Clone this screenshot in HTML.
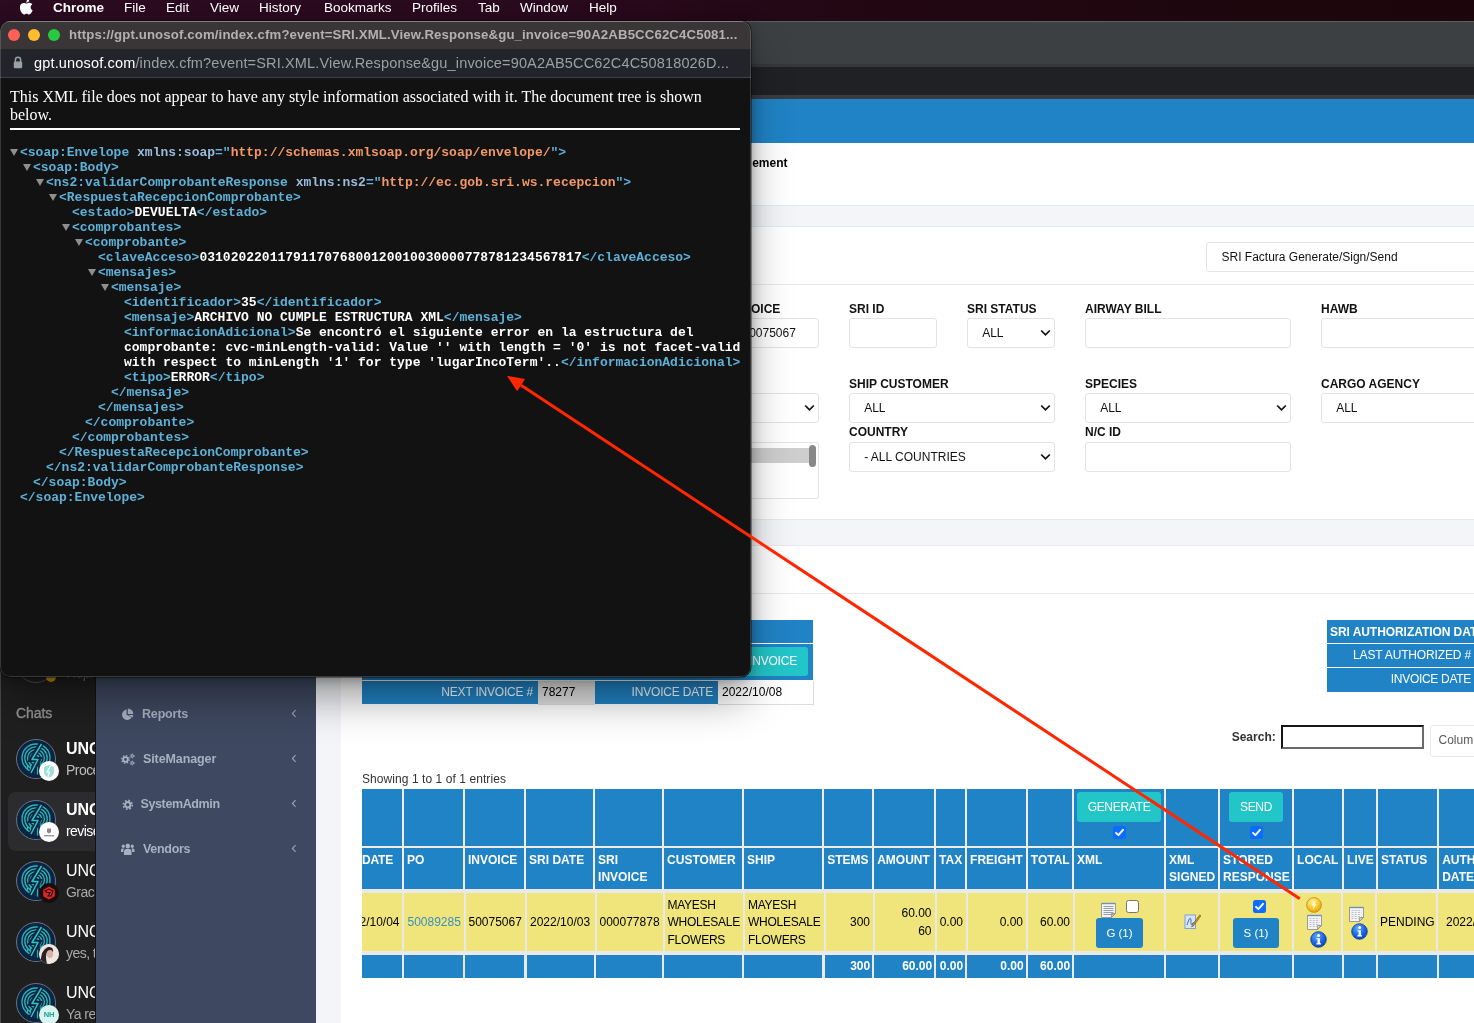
<!DOCTYPE html>
<html lang="en">
<head>
<meta charset="utf-8">
<title>SRI XML View Response</title>
<style>
*{box-sizing:border-box;margin:0;padding:0}
html,body{width:1474px;height:1023px;overflow:hidden;background:#2b0b20}
body{position:relative;font-family:"Liberation Sans",Arial,sans-serif;font-size:13px;color:#000}
.abs{position:absolute}
/* ---------- mac menu bar ---------- */
#menubar{position:absolute;left:0;top:0;width:1474px;height:22px;background:linear-gradient(90deg,#2b0b20 0%,#2a0a1f 35%,#220712 60%,#1c060b 100%);color:#fff;font-size:13.5px;line-height:16px}
#menubar span{position:absolute;top:0px;white-space:nowrap}
/* ---------- main chrome window (behind) ---------- */
#mainwin{position:absolute;left:0;top:21px;width:1474px;height:1002px;background:#fff;overflow:hidden;border-top-left-radius:10px}
#mw-title{position:absolute;left:0;top:0;width:1474px;height:43px;background:#3d4043;border-top:1px solid #5d6063;box-shadow:0 -1px 0 #0a0406}
#mw-title2{position:absolute;left:0;top:43px;width:1474px;height:3px;background:#35373a}
#mw-tool{position:absolute;left:0;top:46px;width:1474px;height:28px;background:#202124}
#mw-tool2{position:absolute;left:0;top:74px;width:1474px;height:4px;background:#3a3c40}
#bluebar{position:absolute;left:316px;top:78px;width:1158px;height:44px;background:#2083c5}
#pagebg{position:absolute;left:316px;top:122px;width:1158px;height:880px;background:#f3f5f8}
.card{position:absolute;background:#fff}
.lbl{position:absolute;font-weight:bold;font-size:12px;line-height:14px;color:#111;white-space:nowrap}
.inp{position:absolute;height:30px;border:1px solid #e2e3e4;border-radius:3px;background:#fff;font-size:12px;line-height:29px;padding-left:14px;color:#111;white-space:nowrap;overflow:hidden}
.inp svg{position:absolute;right:6px;top:10px}
/* ---------- sidebar ---------- */
#sidebar{position:absolute;left:96px;top:600px;width:220px;height:423px;background:#3e4860}
.sitem{position:absolute;left:0;width:220px;height:20px;color:#a7b1c2;font-weight:bold;font-size:12.5px;line-height:20px}
.sitem b{position:absolute;top:0;white-space:nowrap}
.sitem svg{position:absolute}
/* ---------- chat panel ---------- */
#chat{position:absolute;left:0;top:600px;width:96px;height:423px;background:#1f1f1f;overflow:hidden;color:#fff}
.av{position:absolute;left:16px;width:40px;height:40px;border-radius:50%;background:#0c2444;border:1px solid #6d7380;overflow:hidden}
.bdg{position:absolute;left:39px;width:20px;height:20px;border-radius:50%;background:#fff}
.cn{position:absolute;left:66px;font-size:16px;line-height:20px;white-space:nowrap}
.cm{position:absolute;left:66px;font-size:14px;line-height:18px;color:#a9a9a9;white-space:nowrap;letter-spacing:-.55px}
/* ---------- data table ---------- */
.th{position:absolute;background:#2083c5;color:#fff;font-weight:bold;font-size:12px;line-height:17px;padding:4px 0 0 3px;white-space:nowrap;overflow:hidden}
.td{position:absolute;background:#f0e57a;color:#000;font-size:13px;line-height:17.5px;white-space:nowrap;overflow:hidden}
.tf{position:absolute;background:#2083c5;color:#fff;font-weight:bold;font-size:12px;line-height:23px;text-align:right;padding-right:2px;white-space:nowrap;overflow:hidden}
.btn{position:absolute;border-radius:3px;color:#fff;text-align:center;white-space:nowrap}
.cb{position:absolute;width:13px;height:13px;border-radius:2.5px;background:#0b6cff}
.cb svg{position:absolute;left:0;top:0}
.cbo{position:absolute;width:13px;height:13px;border-radius:2.5px;background:#fff;border:1px solid #767676}
/* ---------- popup window ---------- */
#popup{position:absolute;left:0;top:21px;width:751px;height:656px;border-radius:10px;background:#121212;overflow:hidden;box-shadow:0 0 0 .5px rgba(0,0,0,.7),0 24px 44px -5px rgba(0,0,0,.42),0 2px 12px 0 rgba(0,0,0,.30)}
#pp-title{position:absolute;left:0;top:0;width:751px;height:28.5px;background:#3a3638;border-top:1px solid #6a6769;border-bottom:1px solid #0c0c0c}
#pp-title .tl{position:absolute;top:7px;width:12px;height:12px;border-radius:50%}
#pp-title .tt{position:absolute;left:69px;top:5px;font-weight:bold;font-size:13.2px;line-height:16px;color:#b3b0b2;white-space:nowrap;letter-spacing:.135px}
#pp-addr{position:absolute;left:0;top:28px;width:751px;height:29px;background:#22242a;border-bottom:1px solid #3d3f45}
#pp-addr .u{position:absolute;left:34px;top:5px;font-size:14.5px;line-height:18px;color:#9aa0a6;white-space:nowrap;letter-spacing:.16px}
#pp-addr .u i{font-style:normal;color:#fff}
#pp-msg{position:absolute;left:10px;top:67px;width:735px;font-family:"Liberation Serif","Times New Roman",serif;font-size:16px;line-height:18px;color:#fff}
#pp-hr{position:absolute;left:10px;top:107px;width:730px;height:2px;background:#fff}
.xl{position:absolute;font-family:"Liberation Mono","Courier New",monospace;font-weight:bold;font-size:13px;line-height:15px;white-space:pre;color:#fff;height:15px}
.xl .t{color:#5db0d7}.xl .an{color:#9bbbdc}.xl .av2{color:#f29766}
.xl .tri{position:absolute;left:-10px;top:4px;width:0;height:0;border-left:4px solid transparent;border-right:4px solid transparent;border-top:7px solid #8f8f8f}
#popup:after{content:"";position:absolute;left:0;top:0;right:0;bottom:0;border-radius:10px;border:1px solid rgba(255,255,255,.16);pointer-events:none}
</style>
</head>
<body>
<div id="root" style="position:absolute;left:0;top:0;width:1474px;height:1023px;will-change:transform">
<!-- MENUBAR -->
<div id="menubar">
<svg class="abs" style="left:19.500px;top:-1.500px" width="14" height="16.500" viewBox="0 0 170 200"><path fill="#fff" d="M150.4 146.7c-2.8 6.5-6.100 12.500-9.900 18-5.200 7.400-9.500 12.600-12.800 15.500-5.100 4.700-10.600 7.100-16.500 7.200-4.200 0-9.300-1.200-15.200-3.600-5.900-2.400-11.400-3.600-16.400-3.600-5.200 0-10.800 1.200-16.800 3.600-6 2.400-10.800 3.700-14.500 3.800-5.600.2-11.200-2.200-16.800-7.400-3.600-3.100-8.100-8.500-13.400-16.100-5.700-8.100-10.500-17.400-14.200-28.100C.9 124.300-1 113.100-1 102.300c0-12.400 2.700-23.100 8-32 4.200-7.200 9.800-12.900 16.800-17 7-4.200 14.600-6.300 22.800-6.400 4.500 0 10.300 1.400 17.600 4.100 7.200 2.700 11.900 4.100 13.900 4.100 1.500 0 6.700-1.600 15.500-4.800 8.300-3 15.300-4.200 21.100-3.700 15.600 1.300 27.300 7.400 35.100 18.500-13.900 8.400-20.800 20.300-20.700 35.400.1 11.800 4.400 21.700 12.800 29.400 3.800 3.600 8.100 6.400 12.800 8.400-1 3-2.100 5.800-3.300 8.500zM115 3.900c0 9.300-3.400 17.900-10.100 25.900-8.100 9.500-18 15-28.600 14.100-.1-1.100-.2-2.300-.2-3.500 0-8.900 3.900-18.400 10.700-26.200 3.400-3.900 7.800-7.200 13-9.800 5.300-2.600 10.200-4 14.900-4.300.2 1.300.3 2.600.3 3.800z"/></svg>
<span style="left:53px;font-weight:bold">Chrome</span>
<span style="left:124px">File</span>
<span style="left:166px">Edit</span>
<span style="left:210px">View</span>
<span style="left:259px">History</span>
<span style="left:324px">Bookmarks</span>
<span style="left:412px">Profiles</span>
<span style="left:478px">Tab</span>
<span style="left:520px">Window</span>
<span style="left:589px">Help</span>
</div>

<!-- MAIN WINDOW BEHIND -->
<div id="mainwin">
<div id="mw-title"></div><div id="mw-title2"></div><div id="mw-tool"></div><div id="mw-tool2"></div>
</div>
<div id="bluebar" style="top:99px"></div>
<div id="pagebg" style="top:143px"></div>
<div class="card" style="left:341px;top:143px;width:1133px;height:63px;border-bottom:1px solid #e7eaec"></div>
<div class="abs" style="left:751.5px;top:150px;width:100px;height:30px;overflow:hidden"><div class="abs" style="right:64px;top:5px;font-weight:bold;font-size:12px;line-height:16px;white-space:nowrap">SRI Invoice Management</div></div>
<div class="card" style="left:341px;top:226px;width:1133px;height:294px;border-top:1px solid #e7eaec;border-bottom:1px solid #e7eaec"></div>
<div class="abs" style="left:341px;top:284px;width:1133px;height:1px;background:#e7eaec"></div>
<div class="card" style="left:341px;top:545px;width:1133px;height:478px;border-top:1px solid #e7eaec"></div>
<div class="abs" style="left:341px;top:593px;width:1133px;height:1px;background:#e7eaec"></div>
<div class="inp" style="left:1206px;top:242px;width:300px;height:30px;padding-left:14.5px">SRI Factura Generate/Sign/Send</div>
<div class="lbl" style="left:731px;top:302px">INVOICE</div>
<div class="inp" style="left:731px;top:318px;width:88px;height:30px;padding-left:10.5px">50075067</div>
<div class="lbl" style="left:849px;top:302px">SRI ID</div>
<div class="inp" style="left:849px;top:318px;width:88px;height:30px;padding-left:14px"></div>
<div class="lbl" style="left:967px;top:302px">SRI STATUS</div>
<div class="inp" style="left:967px;top:318px;width:88px;height:30px;padding-left:14.2px">ALL</div>
<svg class="abs" style="left:1040.2px;top:329.1px" width="11" height="8" viewBox="0 0 11 8"><path d="M1.2 1.5 L5.5 5.8 L9.8 1.5" fill="none" stroke="#111" stroke-width="1.75"/></svg>
<div class="lbl" style="left:1085px;top:302px">AIRWAY BILL</div>
<div class="inp" style="left:1085px;top:318px;width:206px;height:30px;padding-left:14px"></div>
<div class="lbl" style="left:1321px;top:302px">HAWB</div>
<div class="inp" style="left:1321px;top:318px;width:206px;height:30px;padding-left:14px"></div>
<div class="lbl" style="left:613px;top:377px">CUSTOMER</div>
<div class="inp" style="left:613px;top:393px;width:206px;height:30px;padding-left:14px">ALL</div>
<svg class="abs" style="left:804.2px;top:404.1px" width="11" height="8" viewBox="0 0 11 8"><path d="M1.2 1.5 L5.5 5.8 L9.8 1.5" fill="none" stroke="#111" stroke-width="1.75"/></svg>
<div class="lbl" style="left:849px;top:377px">SHIP CUSTOMER</div>
<div class="inp" style="left:849px;top:393px;width:206px;height:30px;padding-left:14.2px">ALL</div>
<svg class="abs" style="left:1040.2px;top:404.1px" width="11" height="8" viewBox="0 0 11 8"><path d="M1.2 1.5 L5.5 5.8 L9.8 1.5" fill="none" stroke="#111" stroke-width="1.75"/></svg>
<div class="lbl" style="left:1085px;top:377px">SPECIES</div>
<div class="inp" style="left:1085px;top:393px;width:206px;height:30px;padding-left:14.2px">ALL</div>
<svg class="abs" style="left:1276.2px;top:404.1px" width="11" height="8" viewBox="0 0 11 8"><path d="M1.2 1.5 L5.5 5.8 L9.8 1.5" fill="none" stroke="#111" stroke-width="1.75"/></svg>
<div class="lbl" style="left:1321px;top:377px">CARGO AGENCY</div>
<div class="inp" style="left:1321px;top:393px;width:206px;height:30px;padding-left:14.2px">ALL</div>
<div class="lbl" style="left:849px;top:425px">COUNTRY</div>
<div class="inp" style="left:849px;top:442px;width:206px;height:30px;padding-left:14.2px">- ALL COUNTRIES</div>
<svg class="abs" style="left:1040.2px;top:453.1px" width="11" height="8" viewBox="0 0 11 8"><path d="M1.2 1.5 L5.5 5.8 L9.8 1.5" fill="none" stroke="#111" stroke-width="1.75"/></svg>
<div class="lbl" style="left:1085px;top:425px">N/C ID</div>
<div class="inp" style="left:1085px;top:442px;width:206px;height:30px;padding-left:14px"></div>
<div class="inp" style="left:613px;top:442px;width:206px;height:57px"></div>
<div class="abs" style="left:620px;top:448px;width:188.5px;height:15px;background:#cecece"></div>
<div class="abs" style="left:809px;top:445px;width:7px;height:22px;border-radius:3.5px;background:#888"></div>
<div class="abs" style="left:362px;top:620px;width:451px;height:23px;background:#2083c5"></div>
<div class="abs" style="left:362px;top:644px;width:451px;height:36px;background:#2083c5"></div>
<div class="btn" style="left:660px;top:647px;width:148px;height:29px;background:#23c6c8;font-size:12px;line-height:29px;text-align:right;padding-right:11px;letter-spacing:-.2px">GENERATE INVOICE</div>
<div class="abs" style="left:362px;top:681px;width:176px;height:23px;background:#2083c5;color:#fff;font-size:12px;line-height:23px;text-align:right;padding-right:5px;letter-spacing:-.2px">NEXT INVOICE #</div>
<div class="abs" style="left:538px;top:681px;width:57px;height:23.6px;background:#e4e4e4;font-size:12px;line-height:22px;padding-left:4px;border-bottom:1px solid #ddd">78277</div>
<div class="abs" style="left:595px;top:681px;width:123px;height:23px;background:#2083c5;color:#fff;font-size:12px;line-height:23px;text-align:right;padding-right:5px;letter-spacing:-.2px">INVOICE DATE</div>
<div class="abs" style="left:718px;top:681px;width:95.5px;height:23.6px;background:#fff;font-size:12px;line-height:22px;padding-left:4px;border:1px solid #ddd;border-left:0;border-top:0">2022/10/08</div>
<div class="abs" style="left:1327px;top:620px;width:160px;height:23px;background:#2083c5;color:#fff;font-weight:bold;font-size:12px;line-height:25px;padding-left:3px;white-space:nowrap;letter-spacing:-.06px;overflow:hidden">SRI AUTHORIZATION DATE</div>
<div class="abs" style="left:1327px;top:644px;width:147px;height:23px;background:#2083c5;color:#fff;font-size:12px;line-height:23px;text-align:right;padding-right:3px;white-space:nowrap;letter-spacing:-.15px">LAST AUTHORIZED #</div>
<div class="abs" style="left:1327px;top:668px;width:147px;height:24px;background:#2083c5;color:#fff;font-size:12px;line-height:23px;text-align:right;padding-right:3px;white-space:nowrap;letter-spacing:-.3px">INVOICE DATE</div>
<div class="abs" style="left:1231.700px;top:729px;font-weight:bold;font-size:12px;line-height:16px;color:#333">Search:</div>
<div class="abs" style="left:1281px;top:725px;width:143px;height:24px;background:#fff;border:2px solid;border-color:#161616 #6a6a6a #6a6a6a #161616"></div>
<div class="abs" style="left:1429.500px;top:725px;width:60px;height:32px;background:#fff;border:1px solid #e7eaec;border-radius:3px;color:#5a5a5a;font-size:12px;line-height:29px;padding-left:8px">Columns</div>
<div class="abs" style="left:362px;top:771px;font-size:12px;line-height:16px;color:#333;letter-spacing:.07px">Showing 1 to 1 of 1 entries</div>
<div class="abs" style="left:362px;top:789px;width:1112px;height:100px;background:#f1ece8"></div>
<div class="abs" style="left:362px;top:888.6px;width:1112px;height:89.4px;background:#e9e9eb"></div>
<div class="th" style="left:362.0px;top:789px;width:39.9px;height:56.8px"></div>
<div class="th" style="left:362.0px;top:848px;width:39.9px;height:40.6px;padding-left:0;letter-spacing:-.2px;">DATE</div>
<div class="td" style="left:362.0px;top:892.8px;width:39.9px;height:58px"></div>
<div class="tf" style="left:362.0px;top:955px;width:39.9px;height:23px"></div>
<div class="th" style="left:404.1px;top:789px;width:58.7px;height:56.8px"></div>
<div class="th" style="left:404.1px;top:848px;width:58.7px;height:40.6px;">PO</div>
<div class="td" style="left:404.1px;top:892.8px;width:59.7px;height:58px"></div>
<div class="tf" style="left:404.1px;top:955px;width:58.9px;height:23px"></div>
<div class="th" style="left:465.0px;top:789px;width:58.9px;height:56.8px"></div>
<div class="th" style="left:465.0px;top:848px;width:58.9px;height:40.6px;">INVOICE</div>
<div class="td" style="left:466.0px;top:892.8px;width:58.9px;height:58px"></div>
<div class="tf" style="left:465.2px;top:955px;width:59.3px;height:23px"></div>
<div class="th" style="left:526.1px;top:789px;width:66.8px;height:56.8px"></div>
<div class="th" style="left:526.1px;top:848px;width:66.8px;height:40.6px;">SRI DATE</div>
<div class="td" style="left:527.1px;top:892.8px;width:67.8px;height:58px"></div>
<div class="tf" style="left:526.7px;top:955px;width:67.2px;height:23px"></div>
<div class="th" style="left:595.1px;top:789px;width:66.8px;height:56.8px"></div>
<div class="th" style="left:595.1px;top:848px;width:66.8px;height:40.6px;">SRI<br>INVOICE</div>
<div class="td" style="left:597.1px;top:892.8px;width:65.8px;height:58px"></div>
<div class="tf" style="left:596.1px;top:955px;width:66.1px;height:23px"></div>
<div class="th" style="left:664.1px;top:789px;width:77.8px;height:56.8px"></div>
<div class="th" style="left:664.1px;top:848px;width:77.8px;height:40.6px;">CUSTOMER</div>
<div class="td" style="left:665.1px;top:892.8px;width:77.5px;height:58px"></div>
<div class="tf" style="left:664.4px;top:955px;width:77.7px;height:23px"></div>
<div class="th" style="left:744.1px;top:789px;width:77.9px;height:56.8px"></div>
<div class="th" style="left:744.1px;top:848px;width:77.9px;height:40.6px;">SHIP</div>
<div class="td" style="left:744.8px;top:892.8px;width:79.1px;height:58px"></div>
<div class="tf" style="left:744.3px;top:955px;width:78.1px;height:23px"></div>
<div class="th" style="left:824.2px;top:789px;width:47.8px;height:56.8px"></div>
<div class="th" style="left:824.2px;top:848px;width:47.8px;height:40.6px;">STEMS</div>
<div class="td" style="left:826.1px;top:892.8px;width:46.8px;height:58px"></div>
<div class="tf" style="left:824.6px;top:955px;width:47.6px;height:23px">300</div>
<div class="th" style="left:874.2px;top:789px;width:59.7px;height:56.8px"></div>
<div class="th" style="left:874.2px;top:848px;width:59.7px;height:40.6px;">AMOUNT</div>
<div class="td" style="left:875.1px;top:892.8px;width:59.8px;height:58px"></div>
<div class="tf" style="left:874.4px;top:955px;width:59.8px;height:23px">60.00</div>
<div class="th" style="left:936.1px;top:789px;width:28.8px;height:56.8px"></div>
<div class="th" style="left:936.1px;top:848px;width:28.8px;height:40.6px;">TAX</div>
<div class="td" style="left:937.1px;top:892.8px;width:28.8px;height:58px"></div>
<div class="tf" style="left:936.4px;top:955px;width:28.8px;height:23px">0.00</div>
<div class="th" style="left:967.1px;top:789px;width:58.5px;height:56.8px"></div>
<div class="th" style="left:967.1px;top:848px;width:58.5px;height:40.6px;">FREIGHT</div>
<div class="td" style="left:968.1px;top:892.8px;width:58.0px;height:58px"></div>
<div class="tf" style="left:967.4px;top:955px;width:58.3px;height:23px">0.00</div>
<div class="th" style="left:1027.8px;top:789px;width:44.1px;height:56.8px"></div>
<div class="th" style="left:1027.8px;top:848px;width:44.1px;height:40.6px;">TOTAL</div>
<div class="td" style="left:1028.3px;top:892.8px;width:44.3px;height:58px"></div>
<div class="tf" style="left:1027.9px;top:955px;width:44.2px;height:23px">60.00</div>
<div class="th" style="left:1074.1px;top:789px;width:89.8px;height:56.8px"></div>
<div class="th" style="left:1074.1px;top:848px;width:89.8px;height:40.6px;">XML</div>
<div class="td" style="left:1074.8px;top:892.8px;width:89.1px;height:58px"></div>
<div class="tf" style="left:1074.3px;top:955px;width:89.6px;height:23px"></div>
<div class="th" style="left:1166.1px;top:789px;width:51.8px;height:56.8px"></div>
<div class="th" style="left:1166.1px;top:848px;width:51.8px;height:40.6px;">XML<br>SIGNED</div>
<div class="td" style="left:1166.1px;top:892.8px;width:51.8px;height:58px"></div>
<div class="tf" style="left:1166.1px;top:955px;width:51.8px;height:23px"></div>
<div class="th" style="left:1220.1px;top:789px;width:71.8px;height:56.8px"></div>
<div class="th" style="left:1220.1px;top:848px;width:71.8px;height:40.6px;">STORED<br>RESPONSE</div>
<div class="td" style="left:1220.1px;top:892.8px;width:71.6px;height:58px"></div>
<div class="tf" style="left:1220.1px;top:955px;width:71.8px;height:23px"></div>
<div class="th" style="left:1294.1px;top:789px;width:47.8px;height:56.8px"></div>
<div class="th" style="left:1294.1px;top:848px;width:47.8px;height:40.6px;">LOCAL</div>
<div class="td" style="left:1293.9px;top:892.8px;width:47.1px;height:58px"></div>
<div class="tf" style="left:1294.1px;top:955px;width:47.8px;height:23px"></div>
<div class="th" style="left:1344.1px;top:789px;width:31.7px;height:56.8px"></div>
<div class="th" style="left:1344.1px;top:848px;width:31.7px;height:40.6px;">LIVE</div>
<div class="td" style="left:1343.2px;top:892.8px;width:31.6px;height:58px"></div>
<div class="tf" style="left:1344.1px;top:955px;width:31.7px;height:23px"></div>
<div class="th" style="left:1378.0px;top:789px;width:59.0px;height:56.8px"></div>
<div class="th" style="left:1378.0px;top:848px;width:59.0px;height:40.6px;">STATUS</div>
<div class="td" style="left:1377.0px;top:892.8px;width:58.6px;height:58px"></div>
<div class="tf" style="left:1378.0px;top:955px;width:59.0px;height:23px"></div>
<div class="th" style="left:1439.2px;top:789px;width:60.8px;height:56.8px"></div>
<div class="th" style="left:1439.2px;top:848px;width:60.8px;height:40.6px;">AUTH<br>DATE</div>
<div class="td" style="left:1437.8px;top:892.8px;width:62.2px;height:58px"></div>
<div class="tf" style="left:1439.2px;top:955px;width:60.8px;height:23px"></div>
<div class="abs" style="left:362px;top:893px;width:40px;height:57px;overflow:hidden"><div class="abs" style="right:2.5px;top:21px;font-size:12px;line-height:17.5px;white-space:nowrap">2022/10/04</div></div>
<div class="abs" style="left:407.5px;top:914px;font-size:12px;line-height:17.5px;white-space:nowrap;color:#3b8fc4">50089285</div>
<div class="abs" style="left:468.5px;top:914px;font-size:12px;line-height:17.5px;white-space:nowrap;">50075067</div>
<div class="abs" style="left:530px;top:914px;font-size:12px;line-height:17.5px;white-space:nowrap;">2022/10/03</div>
<div class="abs" style="left:599.5px;top:914px;font-size:12px;line-height:17.5px;white-space:nowrap;">000077878</div>
<div class="abs" style="left:667.5px;top:896.5px;font-size:12px;line-height:17.5px;white-space:nowrap;letter-spacing:-.25px">MAYESH<br>WHOLESALE<br>FLOWERS</div>
<div class="abs" style="left:748px;top:896.5px;font-size:12px;line-height:17.5px;white-space:nowrap;letter-spacing:-.25px">MAYESH<br>WHOLESALE<br>FLOWERS</div>
<div class="abs" style="left:750px;width:120px;text-align:right;top:914px;font-size:12px;line-height:17.5px;white-space:nowrap;">300</div>
<div class="abs" style="left:811.5px;width:120px;text-align:right;top:905px;font-size:12px;line-height:17.5px;white-space:nowrap;">60.00<br>60</div>
<div class="abs" style="left:843px;width:120px;text-align:right;top:914px;font-size:12px;line-height:17.5px;white-space:nowrap;">0.00</div>
<div class="abs" style="left:903px;width:120px;text-align:right;top:914px;font-size:12px;line-height:17.5px;white-space:nowrap;">0.00</div>
<div class="abs" style="left:950px;width:120px;text-align:right;top:914px;font-size:12px;line-height:17.5px;white-space:nowrap;">60.00</div>
<div class="abs" style="left:1380px;top:914px;font-size:12px;line-height:17.5px;white-space:nowrap;">PENDING</div>
<div class="abs" style="left:1446px;top:914px;font-size:12px;line-height:17.5px;white-space:nowrap;">2022/10/08</div>
<div class="btn" style="left:1077px;top:792px;width:84px;height:30px;background:#23c6c8;font-size:12px;line-height:30px;letter-spacing:-.3px">GENERATE</div>
<div class="cb" style="left:1113px;top:826px"><svg width="13" height="13" viewBox="0 0 13 13"><path d="M3 6.8 L5.4 9.2 L10 3.8" fill="none" stroke="#fff" stroke-width="1.9" stroke-linecap="round" stroke-linejoin="round"/></svg></div>
<div class="btn" style="left:1229px;top:792px;width:54px;height:30px;background:#23c6c8;font-size:12px;line-height:30px;letter-spacing:-.3px">SEND</div>
<div class="cb" style="left:1250px;top:826px"><svg width="13" height="13" viewBox="0 0 13 13"><path d="M3 6.8 L5.4 9.2 L10 3.8" fill="none" stroke="#fff" stroke-width="1.9" stroke-linecap="round" stroke-linejoin="round"/></svg></div>
<div class="btn" style="left:1096px;top:918px;width:47px;height:30px;background:#2083c5;font-size:11.5px;line-height:30px">G (1)</div>
<div class="btn" style="left:1233px;top:918px;width:46px;height:30px;background:#2083c5;font-size:11.5px;line-height:30px">S (1)</div>
<div class="cbo" style="left:1126px;top:900px"></div>
<div class="cb" style="left:1253px;top:900px"><svg width="13" height="13" viewBox="0 0 13 13"><path d="M3 6.8 L5.4 9.2 L10 3.8" fill="none" stroke="#fff" stroke-width="1.9" stroke-linecap="round" stroke-linejoin="round"/></svg></div>
<svg class="abs" style="left:1099.5px;top:901.8px" width="17" height="17" viewBox="0 0 17 17"><path d="M1.5 1.5 H15.5 V11.5 L11.5 15.5 H1.5 Z" fill="#f4f4f4" stroke="#9a9a9a" stroke-width="1"/><path d="M15.5 11.5 H11.5 V15.5 Z" fill="#d0d0d0" stroke="#8a8a8a" stroke-width=".8"/><path d="M1.5 1.5 H15.5" stroke="#6f8fc0" stroke-width="1.4"/><path d="M3.5 4.5 H13.5" stroke="#8c95a8" stroke-width=".9"/><path d="M3.5 6.5 H13.5" stroke="#8c95a8" stroke-width=".9"/><path d="M3.5 8.5 H13.5" stroke="#8c95a8" stroke-width=".9"/><path d="M3.5 10.5 H13.5" stroke="#8c95a8" stroke-width=".9"/><path d="M3.5 12.5 H13.5" stroke="#8c95a8" stroke-width=".9"/></svg>
<svg class="abs" style="left:1184px;top:913px" width="17" height="17" viewBox="0 0 17 17"><rect x="1" y="2" width="10.5" height="13.5" fill="#d6e6fa" stroke="#7fa2d8" stroke-width="1"/><path d="M3 12 C5 6 6 4 6.8 6 C7.5 8 6 13 8 11 C9.5 9.5 10 9 11 10" fill="none" stroke="#3a62b5" stroke-width="1"/><path d="M15.8 1.8 L8.5 11.5 L7.6 13.8 L9.9 12.6 L16.8 2.9 Z" fill="#c9963a" stroke="#6b4a17" stroke-width=".6"/></svg>
<svg class="abs" style="left:1306px;top:897px" width="16" height="16" viewBox="0 0 16 16"><defs><radialGradient id="gy" cx=".4" cy=".3" r=".8"><stop offset="0" stop-color="#fff2a0"/><stop offset=".6" stop-color="#f5c21e"/><stop offset="1" stop-color="#d99a06"/></radialGradient></defs><circle cx="8" cy="8" r="7.4" fill="url(#gy)" stroke="#c58a08" stroke-width=".8"/><path d="M9.6 3 L6 8.4 H8 L6.6 13 L10.4 7.2 H8.3 Z" fill="#fff"/></svg>
<svg class="abs" style="left:1306px;top:914px" width="17" height="17" viewBox="0 0 17 17"><path d="M1.5 1.5 H15.5 V11.5 L11.5 15.5 H1.5 Z" fill="#f4f4f4" stroke="#9a9a9a" stroke-width="1"/><path d="M15.5 11.5 H11.5 V15.5 Z" fill="#d0d0d0" stroke="#8a8a8a" stroke-width=".8"/><path d="M1.5 1.5 H15.5" stroke="#6f8fc0" stroke-width="1.4"/><path d="M3.5 4.5 H13.5" stroke="#b5b9c2" stroke-width=".9" stroke-dasharray="2 1.2"/><path d="M3.5 6.5 H13.5" stroke="#b5b9c2" stroke-width=".9" stroke-dasharray="2 1.2"/><path d="M3.5 8.5 H13.5" stroke="#b5b9c2" stroke-width=".9" stroke-dasharray="2 1.2"/><path d="M3.5 10.5 H13.5" stroke="#b5b9c2" stroke-width=".9" stroke-dasharray="2 1.2"/><path d="M3.5 12.5 H13.5" stroke="#b5b9c2" stroke-width=".9" stroke-dasharray="2 1.2"/></svg>
<svg class="abs" style="left:1310px;top:931px" width="17" height="17" viewBox="0 0 17 17"><defs><radialGradient id="gi1310" cx=".4" cy=".3" r=".8"><stop offset="0" stop-color="#5fa8ff"/><stop offset=".6" stop-color="#1560e0"/><stop offset="1" stop-color="#0a3fb0"/></radialGradient></defs><circle cx="8.5" cy="8.5" r="7.8" fill="url(#gi1310)" stroke="#0b3a9a" stroke-width=".8"/><circle cx="8.6" cy="4.6" r="1.5" fill="#fff"/><path d="M6.4 7.2 H9.9 V12.3 H11 V13.4 H6.3 V12.3 H7.5 V8.3 H6.4 Z" fill="#fff"/></svg>
<svg class="abs" style="left:1348px;top:906px" width="17" height="17" viewBox="0 0 17 17"><path d="M1.5 1.5 H15.5 V11.5 L11.5 15.5 H1.5 Z" fill="#f4f4f4" stroke="#9a9a9a" stroke-width="1"/><path d="M15.5 11.5 H11.5 V15.5 Z" fill="#d0d0d0" stroke="#8a8a8a" stroke-width=".8"/><path d="M1.5 1.5 H15.5" stroke="#6f8fc0" stroke-width="1.4"/><path d="M3.5 4.5 H13.5" stroke="#b5b9c2" stroke-width=".9" stroke-dasharray="2 1.2"/><path d="M3.5 6.5 H13.5" stroke="#b5b9c2" stroke-width=".9" stroke-dasharray="2 1.2"/><path d="M3.5 8.5 H13.5" stroke="#b5b9c2" stroke-width=".9" stroke-dasharray="2 1.2"/><path d="M3.5 10.5 H13.5" stroke="#b5b9c2" stroke-width=".9" stroke-dasharray="2 1.2"/><path d="M3.5 12.5 H13.5" stroke="#b5b9c2" stroke-width=".9" stroke-dasharray="2 1.2"/></svg>
<svg class="abs" style="left:1351px;top:923px" width="17" height="17" viewBox="0 0 17 17"><defs><radialGradient id="gi1351" cx=".4" cy=".3" r=".8"><stop offset="0" stop-color="#5fa8ff"/><stop offset=".6" stop-color="#1560e0"/><stop offset="1" stop-color="#0a3fb0"/></radialGradient></defs><circle cx="8.5" cy="8.5" r="7.8" fill="url(#gi1351)" stroke="#0b3a9a" stroke-width=".8"/><circle cx="8.6" cy="4.6" r="1.5" fill="#fff"/><path d="M6.4 7.2 H9.9 V12.3 H11 V13.4 H6.3 V12.3 H7.5 V8.3 H6.4 Z" fill="#fff"/></svg>

<div id="sidebar">
<div class="sitem" style="top:104px"><svg style="left:25px;top:4px" width="13" height="13" viewBox="0 0 13 13"><path d="M5.6 1.6 A5.2 5.2 0 1 0 10.6 9.6 L5.6 6.8 Z" fill="#a7b1c2"/><path d="M6.8 .5 A5.4 5.4 0 0 1 12.3 5.9 H6.8 Z" fill="#a7b1c2"/><path d="M7.2 7 H12.3 A5.4 5.4 0 0 1 11.4 9.5 Z" fill="#a7b1c2"/></svg><b style="left:46px;letter-spacing:-0.17px">Reports</b><svg style="left:195px;top:5px" width="6" height="9" viewBox="0 0 6 9"><path d="M4.6 1.2 L1.4 4.500 L4.6 7.800" fill="none" stroke="#9aa5b8" stroke-width="1.1"/></svg></div>
<div class="sitem" style="top:149px"><svg style="left:24.5px;top:4px" width="14" height="13" viewBox="0 0 15 14"><g fill="none" stroke="#a7b1c2"><circle cx="4.8" cy="7" r="2.5" stroke-width="1.9"/><circle cx="4.8" cy="7" r="4" stroke-width="1.5" stroke-dasharray="1.5 1.64"/><circle cx="12" cy="3.2" r="1.3" stroke-width="1.1"/><circle cx="12" cy="3.2" r="2.2" stroke-width="1" stroke-dasharray=".95 1.35"/><circle cx="12" cy="10.8" r="1.3" stroke-width="1.1"/><circle cx="12" cy="10.8" r="2.2" stroke-width="1" stroke-dasharray=".95 1.35"/></g></svg><b style="left:47px;letter-spacing:-0.1px">SiteManager</b><svg style="left:195px;top:5px" width="6" height="9" viewBox="0 0 6 9"><path d="M4.6 1.2 L1.4 4.500 L4.6 7.800" fill="none" stroke="#9aa5b8" stroke-width="1.1"/></svg></div>
<div class="sitem" style="top:194px"><svg style="left:25.5px;top:4.5px" width="11.5" height="11.5" viewBox="0 0 13 13"><g fill="none" stroke="#a7b1c2"><circle cx="6.5" cy="6.5" r="3" stroke-width="2.2"/><circle cx="6.5" cy="6.5" r="5" stroke-width="1.9" stroke-dasharray="1.9 2.03"/></g></svg><b style="left:44.5px;letter-spacing:-0.38px">SystemAdmin</b><svg style="left:195px;top:5px" width="6" height="9" viewBox="0 0 6 9"><path d="M4.6 1.2 L1.4 4.500 L4.6 7.800" fill="none" stroke="#9aa5b8" stroke-width="1.1"/></svg></div>
<div class="sitem" style="top:239px"><svg style="left:25px;top:4px" width="13.5" height="12" viewBox="0 0 15 12" preserveAspectRatio="none"><circle cx="7.5" cy="3" r="2.5" fill="#a7b1c2"/><path d="M3.3 12 V8.5 Q3.3 6 5.5 6 H9.5 Q11.700 6 11.700 8.500 V12 Z" fill="#a7b1c2"/><circle cx="2.500" cy="3.300" r="1.700" fill="#a7b1c2"/><circle cx="12.500" cy="3.300" r="1.700" fill="#a7b1c2"/><path d="M0 9 V7 Q0 5.500 1.500 5.500 H3.300 Q2.500 6.500 2.500 9 Z" fill="#a7b1c2"/><path d="M15 9 V7 Q15 5.500 13.500 5.500 H11.700 Q12.500 6.500 12.500 9 Z" fill="#a7b1c2"/></svg><b style="left:47px;letter-spacing:-0.3px">Vendors</b><svg style="left:195px;top:5px" width="6" height="9" viewBox="0 0 6 9"><path d="M4.6 1.2 L1.4 4.500 L4.6 7.800" fill="none" stroke="#9aa5b8" stroke-width="1.1"/></svg></div>
</div>
<div id="chat">
<div class="abs" style="left:0;top:0;width:1px;height:423px;background:#4a4a4a"></div>
<div class="abs" style="left:8px;top:192px;width:100px;height:59px;border-radius:8px;background:#2c2c2e"></div>
<div class="abs" style="left:16px;top:103.5px;font-size:14px;line-height:18px;color:#939393;letter-spacing:-.05px;-webkit-text-stroke:.35px #939393">Chats</div>
<div class="av" style="top:43px;background:#1f1f1f;border-color:#555"></div><div class="bdg" style="top:71.500px;left:46px;width:10px;height:10px;background:#c9930c"></div>
<div class="cm" style="top:63.500px;color:#777">Repl</div>
<div class="av" style="top:139px"><svg width="38" height="38" viewBox="0 0 38 38"><g fill="none" stroke="#2ab3b3" stroke-width="1.35"><circle cx="19" cy="18" r="2.8"/><circle cx="19" cy="18" r="5.6"/><circle cx="19" cy="18" r="8.4"/><circle cx="19" cy="18" r="11.2"/><circle cx="19" cy="18" r="14"/></g><path d="M19 18 L8 40 H30 Z" fill="#0c2444"/><g fill="none" stroke="#2ab3b3" stroke-width="1.35" stroke-linecap="round"><path d="M13.500 24 V31"/><path d="M16.800 22 V33"/><path d="M20.500 22 V34"/><path d="M24 23 V32"/><path d="M27 25 V30"/><path d="M10.500 26 V29"/></g><path d="M25 2 L14.500 19.500 H21.500 L13 36" fill="none" stroke="#0c2444" stroke-width="5"/><path d="M24.500 4 L15 19.500 H21 L14 33" fill="none" stroke="#2fc4c0" stroke-width="1.500" stroke-linejoin="round"/></svg></div>
<div class="bdg" style="top:161px;background:#fff;overflow:hidden"><svg width="20" height="20" viewBox="0 0 20 20"><path d="M10 4 L15 6 V11 Q15 14.500 10 16.500 Q5 14.500 5 11 V6 Z" fill="#9fe0dc"/><path d="M11.500 5 L8 11 H10.500 L9 15.500" stroke="#fff" stroke-width="1.2" fill="none"/></svg></div>
<div class="cn" style="top:139px;font-weight:bold">UNOSOF</div>
<div class="cm" style="top:161px;color:#bdbdbd">Proce</div>
<div class="av" style="top:200px"><svg width="38" height="38" viewBox="0 0 38 38"><g fill="none" stroke="#2ab3b3" stroke-width="1.35"><circle cx="19" cy="18" r="2.8"/><circle cx="19" cy="18" r="5.6"/><circle cx="19" cy="18" r="8.4"/><circle cx="19" cy="18" r="11.2"/><circle cx="19" cy="18" r="14"/></g><path d="M19 18 L8 40 H30 Z" fill="#0c2444"/><g fill="none" stroke="#2ab3b3" stroke-width="1.35" stroke-linecap="round"><path d="M13.500 24 V31"/><path d="M16.800 22 V33"/><path d="M20.500 22 V34"/><path d="M24 23 V32"/><path d="M27 25 V30"/><path d="M10.500 26 V29"/></g><path d="M25 2 L14.500 19.500 H21.500 L13 36" fill="none" stroke="#0c2444" stroke-width="5"/><path d="M24.500 4 L15 19.500 H21 L14 33" fill="none" stroke="#2fc4c0" stroke-width="1.500" stroke-linejoin="round"/></svg></div>
<div class="bdg" style="top:222px;background:#fff;overflow:hidden"><svg width="20" height="20" viewBox="0 0 20 20"><path d="M8 6.500 H12 V9.500 Q12 11 10 11.500 Q8 11 8 9.500 Z" fill="#8a8a8a"/><rect x="5" y="13" width="10" height="1.400" fill="#9a9a9a"/></svg></div>
<div class="cn" style="top:200px;font-weight:bold">UNOSOF</div>
<div class="cm" style="top:222px;color:#fff">revise</div>
<div class="av" style="top:261px"><svg width="38" height="38" viewBox="0 0 38 38"><g fill="none" stroke="#2ab3b3" stroke-width="1.35"><circle cx="19" cy="18" r="2.8"/><circle cx="19" cy="18" r="5.6"/><circle cx="19" cy="18" r="8.4"/><circle cx="19" cy="18" r="11.2"/><circle cx="19" cy="18" r="14"/></g><path d="M19 18 L8 40 H30 Z" fill="#0c2444"/><g fill="none" stroke="#2ab3b3" stroke-width="1.35" stroke-linecap="round"><path d="M13.500 24 V31"/><path d="M16.800 22 V33"/><path d="M20.500 22 V34"/><path d="M24 23 V32"/><path d="M27 25 V30"/><path d="M10.500 26 V29"/></g><path d="M25 2 L14.500 19.500 H21.500 L13 36" fill="none" stroke="#0c2444" stroke-width="5"/><path d="M24.500 4 L15 19.500 H21 L14 33" fill="none" stroke="#2fc4c0" stroke-width="1.500" stroke-linejoin="round"/></svg></div>
<div class="bdg" style="top:283px;background:#1a0d0d;overflow:hidden"><svg width="20" height="20" viewBox="0 0 20 20"><path d="M10 3.500 L15.800 6.800 V13.200 L10 16.500 L4.200 13.200 V6.800 Z" fill="#e02525"/><path d="M6 8 L10 6 L14 8 L12 13 H9 L11 9.500 H7.500 Z" fill="none" stroke="#1a0d0d" stroke-width="1.100"/></svg></div>
<div class="cn" style="top:261px;">UNOSOF</div>
<div class="cm" style="top:283px;color:#a9a9a9">Graci</div>
<div class="av" style="top:322px"><svg width="38" height="38" viewBox="0 0 38 38"><g fill="none" stroke="#2ab3b3" stroke-width="1.35"><circle cx="19" cy="18" r="2.8"/><circle cx="19" cy="18" r="5.6"/><circle cx="19" cy="18" r="8.4"/><circle cx="19" cy="18" r="11.2"/><circle cx="19" cy="18" r="14"/></g><path d="M19 18 L8 40 H30 Z" fill="#0c2444"/><g fill="none" stroke="#2ab3b3" stroke-width="1.35" stroke-linecap="round"><path d="M13.500 24 V31"/><path d="M16.800 22 V33"/><path d="M20.500 22 V34"/><path d="M24 23 V32"/><path d="M27 25 V30"/><path d="M10.500 26 V29"/></g><path d="M25 2 L14.500 19.500 H21.500 L13 36" fill="none" stroke="#0c2444" stroke-width="5"/><path d="M24.500 4 L15 19.500 H21 L14 33" fill="none" stroke="#2fc4c0" stroke-width="1.500" stroke-linejoin="round"/></svg></div>
<div class="bdg" style="top:344px;background:#e8d8d0;overflow:hidden"><svg width="20" height="20" viewBox="0 0 20 20"><circle cx="10" cy="10" r="10" fill="#efe6e2"/><path d="M2 20 Q1 6 9 3 Q15 2 14 9 Q12 5 8 8 Q6 12 8 20 Z" fill="#2a2224"/><ellipse cx="11" cy="10" rx="3.200" ry="4" fill="#d9b3a6"/></svg></div>
<div class="cn" style="top:322px;">UNOSOF</div>
<div class="cm" style="top:344px;color:#a9a9a9">yes, t</div>
<div class="av" style="top:383px"><svg width="38" height="38" viewBox="0 0 38 38"><g fill="none" stroke="#2ab3b3" stroke-width="1.35"><circle cx="19" cy="18" r="2.8"/><circle cx="19" cy="18" r="5.6"/><circle cx="19" cy="18" r="8.4"/><circle cx="19" cy="18" r="11.2"/><circle cx="19" cy="18" r="14"/></g><path d="M19 18 L8 40 H30 Z" fill="#0c2444"/><g fill="none" stroke="#2ab3b3" stroke-width="1.35" stroke-linecap="round"><path d="M13.500 24 V31"/><path d="M16.800 22 V33"/><path d="M20.500 22 V34"/><path d="M24 23 V32"/><path d="M27 25 V30"/><path d="M10.500 26 V29"/></g><path d="M25 2 L14.500 19.500 H21.500 L13 36" fill="none" stroke="#0c2444" stroke-width="5"/><path d="M24.500 4 L15 19.500 H21 L14 33" fill="none" stroke="#2fc4c0" stroke-width="1.500" stroke-linejoin="round"/></svg></div>
<div class="bdg" style="top:405px;background:#d9f5f0;overflow:hidden"><div style="font-size:7.500px;font-weight:bold;color:#1f9f95;line-height:20px;text-align:center;letter-spacing:-.2px">NH</div></div>
<div class="cn" style="top:383px;">UNOSOF</div>
<div class="cm" style="top:405px;color:#a9a9a9">Ya re</div>
</div>
<div class="abs" style="left:95px;top:600px;width:1px;height:423px;background:#121212"></div>

<div id="popup">
<div id="pp-title"><div class="tl" style="left:8px;background:#fe5f57"></div><div class="tl" style="left:28px;background:#febc2e"></div><div class="tl" style="left:48px;background:#28c840"></div><div class="tt">https://gpt.unosof.com/index.cfm?event=SRI.XML.View.Response&amp;gu_invoice=90A2AB5CC62C4C5081...</div></div>
<div id="pp-addr"><svg class="abs" style="left:13px;top:7px" width="10" height="13" viewBox="0 0 10 13"><path d="M2.400 6 V3.800 A2.600 2.600 0 0 1 7.600 3.800 V6" fill="none" stroke="#9aa0a6" stroke-width="1.500"/><rect x=".8" y="5.600" width="8.400" height="6.600" rx="1.200" fill="#9aa0a6"/></svg><div class="u"><i>gpt.unosof.com</i>/index.cfm?event=SRI.XML.View.Response&amp;gu_invoice=90A2AB5CC62C4C50818026D...</div></div>
<div id="pp-msg">This XML file does not appear to have any style information associated with it. The document tree is shown below.</div>
<div id="pp-hr"></div>
<div class="xl" style="left:20px;top:124px"><span class="tri"></span><span class="t">&lt;soap:Envelope</span> <span class="an">xmlns:soap</span><span class="t">="</span><span class="av2">http://schemas.xmlsoap.org/soap/envelope/</span><span class="t">"&gt;</span></div>
<div class="xl" style="left:33px;top:139px"><span class="tri"></span><span class="t">&lt;soap:Body&gt;</span></div>
<div class="xl" style="left:46px;top:154px"><span class="tri"></span><span class="t">&lt;ns2:validarComprobanteResponse</span> <span class="an">xmlns:ns2</span><span class="t">="</span><span class="av2">http://ec.gob.sri.ws.recepcion</span><span class="t">"&gt;</span></div>
<div class="xl" style="left:59px;top:169px"><span class="tri"></span><span class="t">&lt;RespuestaRecepcionComprobante&gt;</span></div>
<div class="xl" style="left:72px;top:184px"><span class="t">&lt;estado&gt;</span>DEVUELTA<span class="t">&lt;/estado&gt;</span></div>
<div class="xl" style="left:72px;top:199px"><span class="tri"></span><span class="t">&lt;comprobantes&gt;</span></div>
<div class="xl" style="left:85px;top:214px"><span class="tri"></span><span class="t">&lt;comprobante&gt;</span></div>
<div class="xl" style="left:98px;top:229px"><span class="t">&lt;claveAcceso&gt;</span>0310202201179117076800120010030000778781234567817<span class="t">&lt;/claveAcceso&gt;</span></div>
<div class="xl" style="left:98px;top:244px"><span class="tri"></span><span class="t">&lt;mensajes&gt;</span></div>
<div class="xl" style="left:111px;top:259px"><span class="tri"></span><span class="t">&lt;mensaje&gt;</span></div>
<div class="xl" style="left:124px;top:274px"><span class="t">&lt;identificador&gt;</span>35<span class="t">&lt;/identificador&gt;</span></div>
<div class="xl" style="left:124px;top:289px"><span class="t">&lt;mensaje&gt;</span>ARCHIVO NO CUMPLE ESTRUCTURA XML<span class="t">&lt;/mensaje&gt;</span></div>
<div class="xl" style="left:124px;top:304px"><span class="t">&lt;informacionAdicional&gt;</span>Se encontró el siguiente error en la estructura del</div>
<div class="xl" style="left:124px;top:319px">comprobante: cvc-minLength-valid: Value '' with length = '0' is not facet-valid</div>
<div class="xl" style="left:124px;top:334px">with respect to minLength '1' for type 'lugarIncoTerm'..<span class="t">&lt;/informacionAdicional&gt;</span></div>
<div class="xl" style="left:124px;top:349px"><span class="t">&lt;tipo&gt;</span>ERROR<span class="t">&lt;/tipo&gt;</span></div>
<div class="xl" style="left:111px;top:364px"><span class="t">&lt;/mensaje&gt;</span></div>
<div class="xl" style="left:98px;top:379px"><span class="t">&lt;/mensajes&gt;</span></div>
<div class="xl" style="left:85px;top:394px"><span class="t">&lt;/comprobante&gt;</span></div>
<div class="xl" style="left:72px;top:409px"><span class="t">&lt;/comprobantes&gt;</span></div>
<div class="xl" style="left:59px;top:424px"><span class="t">&lt;/RespuestaRecepcionComprobante&gt;</span></div>
<div class="xl" style="left:46px;top:439px"><span class="t">&lt;/ns2:validarComprobanteResponse&gt;</span></div>
<div class="xl" style="left:33px;top:454px"><span class="t">&lt;/soap:Body&gt;</span></div>
<div class="xl" style="left:20px;top:469px"><span class="t">&lt;/soap:Envelope&gt;</span></div>
</div>

<svg class="abs" style="left:0;top:0" width="1474" height="1023" viewBox="0 0 1474 1023"><line x1="521.1" y1="385.2" x2="1299.8" y2="898.8" stroke="#ff2600" stroke-width="3"/><polygon points="506.9,375.8 517.1,391.3 525.1,379.1" fill="#ff2600"/></svg>
</div>
</body>
</html>
